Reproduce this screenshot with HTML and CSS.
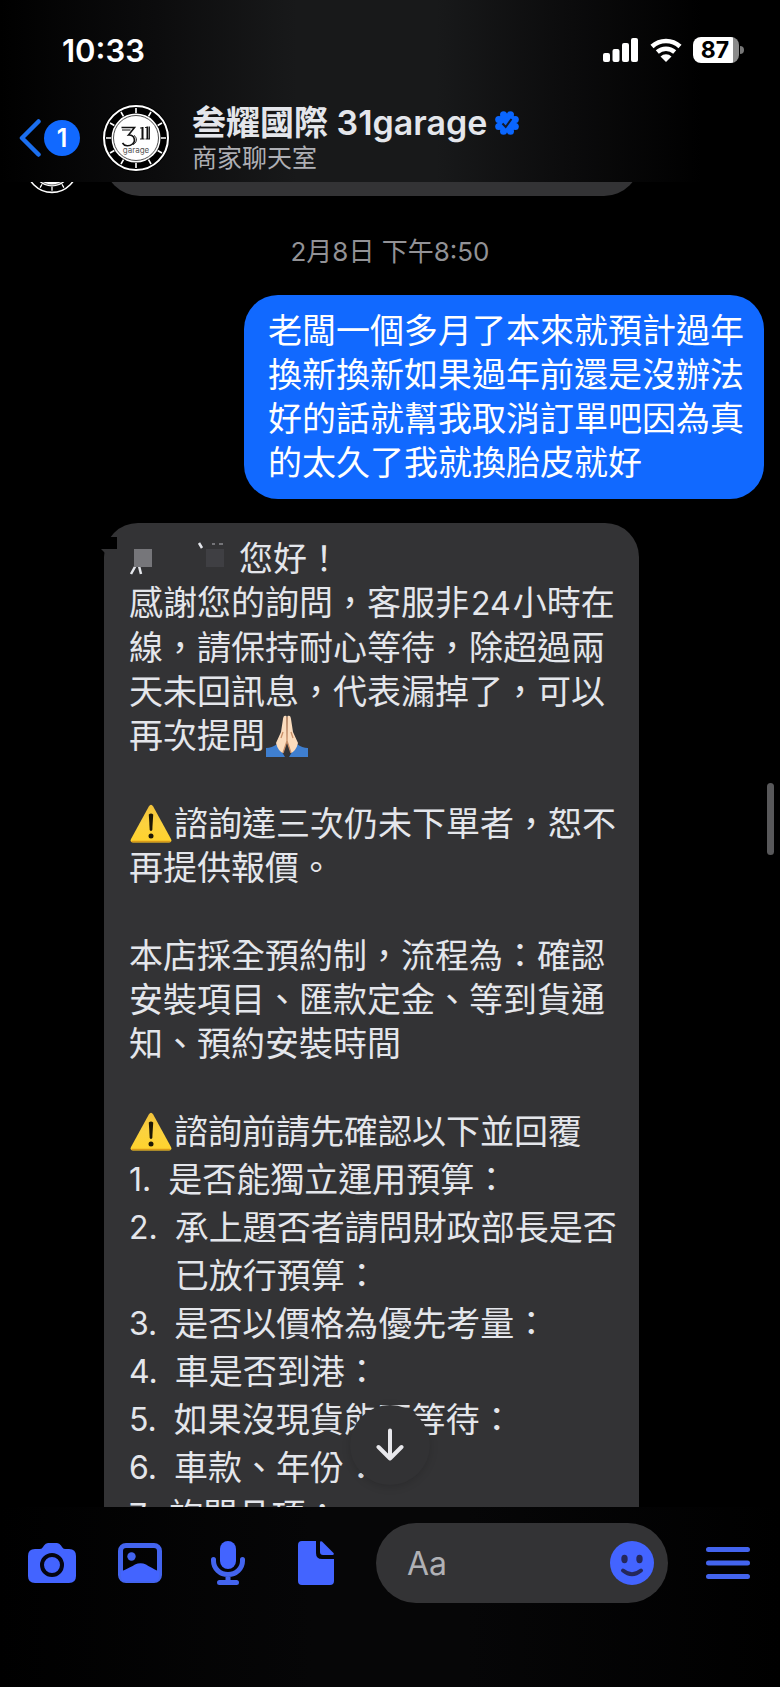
FILE: index.html
```html
<!DOCTYPE html>
<html lang="zh-Hant">
<head>
<meta charset="utf-8">
<meta name="viewport" content="width=device-width, initial-scale=1">
<title>叁耀國際 31garage</title>
<link rel="stylesheet" href="styles.css">
</head>
<body>
<svg class="defs" aria-hidden="true">
  <symbol id="logo" viewBox="0 0 68 68">
    <circle cx="34" cy="34" r="34" fill="#000"/>
    <circle cx="34" cy="34" r="32" fill="none" stroke="#fff" stroke-width="2"/>
    <g stroke="#fff" stroke-width="1.600">
      <path d="M34 4v5M34 59v5M4 34h5M59 34h5"/>
      <path d="M34 4v5M34 59v5M4 34h5M59 34h5" transform="rotate(30 34 34)"/>
      <path d="M34 4v5M34 59v5M4 34h5M59 34h5" transform="rotate(60 34 34)"/>
    </g>
    <circle cx="34" cy="34" r="24.500" fill="#fff"/>
    <circle cx="34" cy="34" r="22.500" fill="none" stroke="#000" stroke-width=".7"/>
    <g fill="none" stroke="#111">
      <path d="M19.500 23.500h13l-6 7.500c6-.5 7.500 6 4 9-3 2.500-8 2.500-10-1" stroke-width="1.600"/>
      <path d="M20 26h8.500M32 31.500c3.500 2 3 7.500-1 9" stroke-width="1"/>
      <path d="M40.500 23v12M45.500 22.500v12.500" stroke-width="2"/>
      <path d="M38 24h2M43 23.500h2M38 35h4.500M43.500 35h4.500M47.500 22.500v12.500" stroke-width=".9"/>
    </g>
    <text x="34" y="49" text-anchor="middle" class="logo-word">garage</text>
  </symbol>
  <symbol id="warning" viewBox="0 0 42 40">
    <defs><linearGradient id="amber" x1="0" y1="0" x2="0" y2="1"><stop offset="0" stop-color="#f2c23a"/><stop offset=".5" stop-color="#fbd23f"/><stop offset="1" stop-color="#ffd32c"/></linearGradient></defs>
    <path d="M18.800 2.500q2.200-3.500 4.400 0L41 35q1.500 3.500-2 3.500H3q-3.500 0-2-3.500z" fill="url(#amber)"/>
    <path d="M2 37.500h38" stroke="#d99a18" stroke-width="1.500" stroke-linecap="round"/>
    <path d="M18.800 10.500q2.200-2 4.400 0l-.9 15.500q-1.300 1.800-2.600 0z" fill="#1c1706"/>
    <circle cx="21" cy="32" r="2.500" fill="#1c1706"/>
  </symbol>
</svg>

<div class="app">
  <header class="top">
    <div class="status">
      <time class="clock">10:33</time>
      <div class="status-icons">
        <svg width="36" height="24" viewBox="0 0 36 24" fill="#fff" role="img" aria-label="訊號"><rect x="0" y="15" width="7" height="9" rx="2"/><rect x="9.500" y="11" width="7" height="13" rx="2"/><rect x="19" y="5" width="7" height="19" rx="2"/><rect x="28" y="0" width="7" height="24" rx="2"/></svg>
        <svg width="32" height="24" viewBox="0 0 32 24" role="img" aria-label="Wi-Fi"><path d="M2 8.500a20.500 20.500 0 0 1 28 0M7.300 14a13 13 0 0 1 17.400 0" fill="none" stroke="#fff" stroke-width="4.500"/><path d="M16 24l-5.500-5.600a8 8 0 0 1 11 0z" fill="#fff"/></svg>
        <span class="battery"><span class="battery-body">87</span><span class="battery-cap"></span></span>
      </div>
    </div>
    <div class="chat-head">
      <button class="back" type="button" aria-label="返回，1 則未讀">
        <svg width="22" height="38" viewBox="0 0 22 38" aria-hidden="true"><path d="M19.500 2.500L3 19l16.500 16.500" fill="none" stroke="#1b6ff0" stroke-width="4.500" stroke-linecap="round" stroke-linejoin="round"/></svg>
        <span class="unread">1</span>
      </button>
      <svg class="avatar" aria-hidden="true"><use href="#logo"/></svg>
      <div class="who">
        <h1 class="name">叁耀國際 31garage
          <svg width="24" height="24" viewBox="0 0 24 24" role="img" aria-label="已驗證"><g fill="#0a66ff"><circle cx="12" cy="12" r="9.500"/><circle cx="15.500" cy="3.700" r="3.500"/><circle cx="20.300" cy="8.500" r="3.500"/><circle cx="20.300" cy="15.500" r="3.500"/><circle cx="15.500" cy="20.300" r="3.500"/><circle cx="8.500" cy="20.300" r="3.500"/><circle cx="3.700" cy="15.500" r="3.500"/><circle cx="3.700" cy="8.500" r="3.500"/><circle cx="8.500" cy="3.700" r="3.500"/></g><path d="M7.500 12.500l3.200 3.500 5.800-8" fill="none" stroke="#141b2c" stroke-width="2"/></svg>
        </h1>
        <p class="subtitle">商家聊天室</p>
      </div>
    </div>
  </header>

  <main class="thread">
    <div class="previous">
      <svg class="avatar-small" aria-hidden="true"><use href="#logo"/></svg>
      <div class="previous-bubble"></div>
    </div>
    <time class="stamp">2月8日 下午8:50</time>
    <div class="bubble sent">老闆一個多月了本來就預計過年換新換新如果過年前還是沒辦法好的話就幫我取消訂單吧因為真的太久了我就換胎皮就好</div>
    <div class="bubble received">
      <svg class="nick" viewBox="0 0 18 20" aria-hidden="true"><path d="M0 0h16v12H0z" fill="#000"/><path d="M0 12h6v6z" fill="#333335"/></svg>
      <p><svg class="masked" viewBox="0 0 110 44" aria-hidden="true"><path d="M7 28L2 37M10 29l2 8M70 6l3 5" stroke="#e4e6eb" stroke-width="2.500" fill="none"/><path d="M83 7h3M90 7h4" stroke="#8a8a8e" stroke-width="1.500"/><path d="M5 12h18v18H5z" fill="#76767a"/><path d="M77 12h18v18H77z" fill="#3f3f43"/></svg>您好！</p>
      <p>感謝您的詢問，客服非<span class="number">24</span>小時在線，請保持耐心等待，除超過兩天未回訊息，代表漏掉了，可以再次提問<svg class="emoji" viewBox="0 0 42 42" role="img" aria-label="合十"><path d="M0 33q6 0 11-4l8 13H0zM42 33q-6 0-11-4l-8 13h19z" fill="#3f7fd0"/><path d="M20.500 1q-3-1.500-3.500 3L15 17 10 28q2 8 7 10l4-12zM21.500 1q3-1.500 3.500 3l2 13 5 11q-2 8-7 10l-4-12z" fill="#fbdcbd"/><path d="M21 2v24l-4 12M21 26l4 12M17 17l-2 6M25 17l2 6" fill="none" stroke="#c98f68" stroke-width="1.300"/></svg></p>
      <p class="gap-above"><svg class="emoji" role="img" aria-label="警告"><use href="#warning"/></svg>諮詢達三次仍未下單者，恕不再提供報價。</p>
      <p class="gap-above">本店採全預約制，流程為：確認安裝項目、匯款定金、等到貨通知、預約安裝時間</p>
      <p class="gap-above"><svg class="emoji" role="img" aria-label="警告"><use href="#warning"/></svg>諮詢前請先確認以下並回覆</p>
      <ol class="questions">
        <li><span class="marker">1.</span><span>是否能獨立運用預算：</span></li>
        <li><span class="marker">2.</span><span>承上題否者請問財政部長是否已放行預算：</span></li>
        <li><span class="marker">3.</span><span>是否以價格為優先考量：</span></li>
        <li><span class="marker">4.</span><span>車是否到港：</span></li>
        <li><span class="marker">5.</span><span>如果沒現貨能否等待：</span></li>
        <li><span class="marker">6.</span><span>車款、年份：</span></li>
        <li><span class="marker">7.</span><span>詢問品項：</span></li>
      </ol>
    </div>
    <button class="jump" type="button" aria-label="捲動到最新訊息"><svg width="28" height="34" viewBox="0 0 28 34" aria-hidden="true"><path d="M14 2.500v28M2.500 19L14 30.500 25.500 19" fill="none" stroke="#e8e8ec" stroke-width="4" stroke-linecap="round" stroke-linejoin="round"/></svg></button>
    <span class="scroll-thumb"></span>
  </main>

  <footer class="composer">
    <button class="tool" type="button" aria-label="相機"><svg width="48" height="40" viewBox="0 0 48 40"><path d="M7 6h5q2 0 3-2l1-1.500Q17.500 0 20 0h9q2.500 0 4 2.500L34 4q1 2 3 2h4q7 0 7 7v20q0 7-7 7H7q-7 0-7-7V13q0-7 7-7z" fill="#4364ff"/><circle cx="24" cy="22" r="10" fill="#4364ff" stroke="#050510" stroke-width="4"/></svg></button>
    <button class="tool" type="button" aria-label="相簿"><svg width="44" height="40" viewBox="0 0 44 40"><rect x="2.500" y="2.500" width="39" height="35" rx="5.500" fill="none" stroke="#4364ee" stroke-width="5"/><path d="M3 28.500Q13 24 17 21.500q5.500-2.500 11 0Q32 24 41 28.500V34q0 4-4 4H7q-4 0-4-4z" fill="#4364ff"/><circle cx="13.500" cy="13.500" r="4.200" fill="#4364ee"/></svg></button>
    <button class="tool" type="button" aria-label="語音"><svg width="34" height="44" viewBox="0 0 34 44"><rect x="9" y="0" width="16" height="28" rx="8" fill="#4364ff"/><path d="M2.500 18.500V20a14.500 13.500 0 0 0 29 0v-1.500M17 34v6M8.500 41.500h17" fill="none" stroke="#4364ee" stroke-width="5" stroke-linecap="round"/></svg></button>
    <button class="tool" type="button" aria-label="檔案"><svg width="36" height="44" viewBox="0 0 36 44" fill="#4364ff"><path d="M4 0h14v12q0 6 6 6h12v22q0 4-4 4H4q-4 0-4-4V4q0-4 4-4z"/><path d="M22 1.500q0-2 2-1L35.500 12q1 2-1 2H25q-3 0-3-3z"/></svg></button>
    <div class="field">
      <input class="field-input" type="text" placeholder="Aa" aria-label="訊息">
      <button class="smile" type="button" aria-label="表情符號"><svg width="44" height="44" viewBox="0 0 44 44"><circle cx="22" cy="22" r="22" fill="#4364ff"/><ellipse cx="14.500" cy="18" rx="3.200" ry="4.200" fill="#25285a"/><ellipse cx="29.500" cy="18" rx="3.200" ry="4.200" fill="#25285a"/><path d="M13 29.500q9 7.500 18 0" fill="none" stroke="#25285a" stroke-width="4" stroke-linecap="round"/></svg></button>
    </div>
    <button class="tool menu" type="button" aria-label="選單"><svg width="44" height="32" viewBox="0 0 44 32"><path d="M2.500 2.500h39M2.500 16h39M2.500 29.500h39" stroke="#4364ee" stroke-width="5" stroke-linecap="round"/></svg></button>
  </footer>
</div>
</body>
</html>
```

FILE: styles.css
```css
* { box-sizing: border-box; }

body {
  margin: 0;
  background: #000;
  color: #e4e6eb;
  font-family: Inter, "Noto Sans CJK TC", sans-serif;
}

h1, p, ol { margin: 0; padding: 0; }
button { padding: 0; border: 0; background: none; font: inherit; cursor: pointer; }
svg { flex: none; }

.defs { position: absolute; width: 0; height: 0; }
.logo-word { font: 8px Inter, sans-serif; fill: #555; }

.app {
  display: flex;
  flex-direction: column;
  height: 100vh;
}

.top {
  flex: none;
  background: linear-gradient(90deg, #000 0%, #0c0c0d 20%, #18191a 38%, #18191a 56%, #0c0c0d 72%, #000 90%);
}

.status {
  display: flex;
  align-items: center;
  justify-content: space-between;
  height: 100px;
  padding: 0 36px 0 62px;
  color: #fff;
}
.clock { font-size: 31px; font-weight: 600; }
.status-icons { display: flex; align-items: center; gap: 11px; }
.battery { display: flex; align-items: center; gap: 1px; }
.battery-body {
  width: 46px;
  padding-right: 2px;
  border-radius: 8px;
  background: linear-gradient(90deg, #fff 87%, #8a8a8a 87%);
  color: #000;
  font-size: 23px;
  font-weight: 700;
  line-height: 26px;
  text-align: center;
}
.battery-cap { width: 4px; height: 8px; border-radius: 0 4px 4px 0; background: #777; }

.chat-head {
  display: flex;
  align-items: center;
  padding: 3px 16px 9px 19px;
}
.back { display: flex; align-items: center; gap: 3px; }
.unread {
  width: 36px;
  border-radius: 18px;
  background: #1169ff;
  color: #fff;
  font-size: 25px;
  font-weight: 600;
  line-height: 36px;
}
.avatar { width: 68px; height: 68px; margin: 0 22px; }
.name {
  display: flex;
  align-items: center;
  gap: 8px;
  font-size: 34px;
  font-weight: 600;
  line-height: 40px;
}
.subtitle { color: #aeafb4; font-size: 25px; line-height: 30px; }

.thread {
  position: relative;
  display: flex;
  flex: 1;
  flex-direction: column;
  min-height: 0;
  overflow: hidden;
}
.previous {
  display: flex;
  flex: none;
  align-items: flex-end;
  height: 72px;
  margin-top: -58px;
  padding-left: 25px;
}
.avatar-small { width: 54px; height: 54px; margin: 0 25px 2px 0; }
.previous-bubble {
  width: 71%;
  height: 72px;
  border-radius: 36px;
  background: #333335;
}
.stamp {
  flex: none;
  margin: 38px 0 26px;
  color: #929296;
  font-size: 26px;
  line-height: 35px;
  text-align: center;
}

.bubble {
  flex: none;
  border-radius: 34px;
  font-size: 34px;
  line-height: 44px;
}
.sent {
  align-self: flex-end;
  width: 520px;
  max-width: 80%;
  margin: 0 16px 24px 0;
  padding: 14px 16px 14px 24px;
  background: #1169ff;
  color: #fff;
}
.received {
  position: relative;
  width: 535px;
  max-width: 80%;
  margin-left: 104px;
  padding: 14px 14px 14px 25px;
  background: #333335;
}
.nick { position: absolute; top: 14px; left: -3px; width: 18px; height: 20px; }
.masked { width: 110px; height: 44px; vertical-align: top; }
.number { padding: 0 2px; font-size: 32px; }
.emoji { width: 42px; height: 42px; margin: 1px 2px 0 1px; vertical-align: top; }
.gap-above { margin-top: 44px; }

.questions { margin-top: 2px; list-style: none; line-height: 48px; }
.questions li { display: flex; gap: 17px; }
.marker { font-size: 32px; }

.jump {
  position: absolute;
  bottom: 22px;
  left: 50%;
  display: grid;
  place-items: center;
  width: 80px;
  height: 80px;
  margin-left: -40px;
  border-radius: 50%;
  background: #323234;
  box-shadow: 0 2px 8px rgba(0, 0, 0, .15);
}
.scroll-thumb {
  position: absolute;
  top: 601px;
  right: 6px;
  width: 7px;
  height: 72px;
  border-radius: 4px;
  background: #58585a;
}

.composer {
  display: flex;
  flex: none;
  align-items: center;
  padding: 16px 8px 84px;
  background: linear-gradient(90deg, #000, #060607 40%, #060607 60%, #000);
}
.tool { display: grid; flex: none; place-items: center; width: 88px; height: 80px; }
.field {
  display: flex;
  flex: 1;
  align-items: center;
  min-width: 0;
  height: 80px;
  margin: 0 16px;
  padding: 0 14px 0 31px;
  border-radius: 40px;
  background: #333335;
}
.field-input {
  flex: 1;
  min-width: 0;
  padding: 0;
  border: 0;
  outline: 0;
  background: none;
  color: #e4e6eb;
  font: 32px Inter, "Noto Sans CJK TC", sans-serif;
}
.field-input::placeholder { color: #b0b1b5; opacity: 1; }
.smile { display: grid; }
```
